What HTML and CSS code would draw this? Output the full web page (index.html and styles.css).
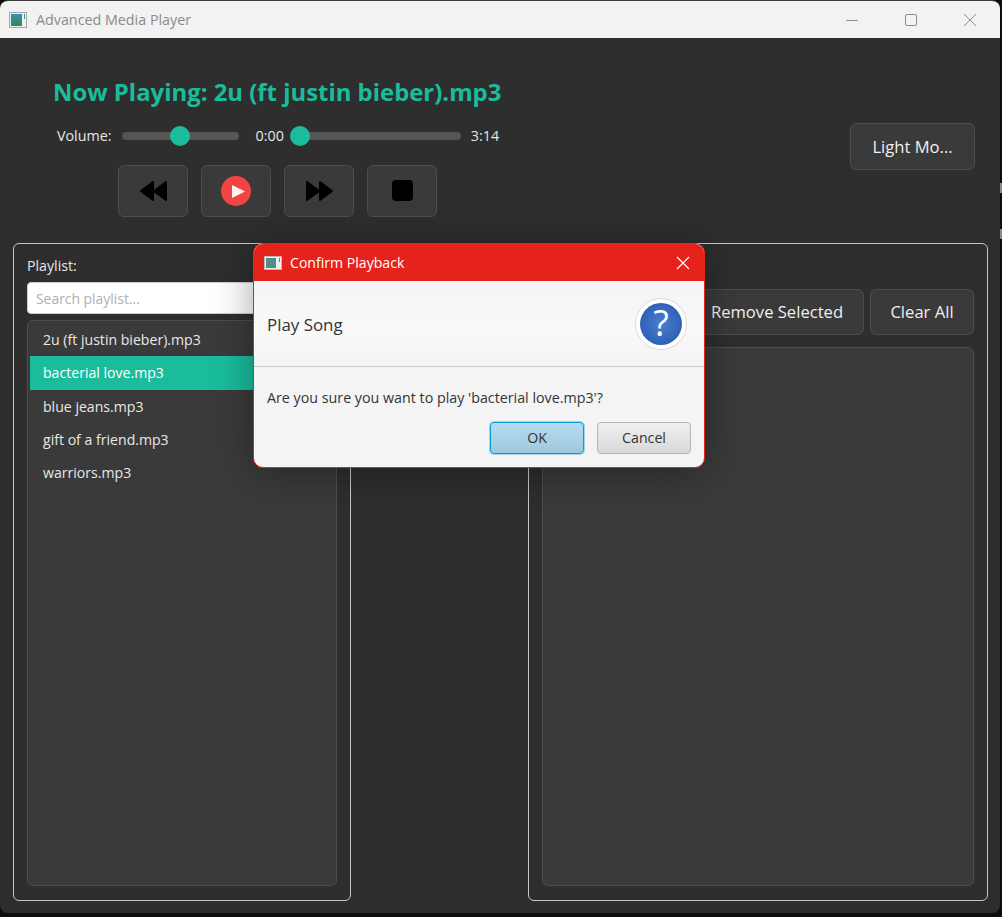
FILE: index.html
```html
<!DOCTYPE html>
<html lang="en">
<head>
<meta charset="utf-8">
<title>Advanced Media Player</title>
<link rel="stylesheet" href="styles.css">
</head>
<body>
<span class="edge-bit edge-a"></span>
<span class="edge-bit edge-b"></span>
<div class="window">
  <header class="titlebar">
    <svg class="app-icon" width="18" height="16" viewBox="0 0 18 16"><defs><linearGradient id="g1" x1="0" y1="0" x2="0" y2="1"><stop offset="0" stop-color="#3f8fb0"/><stop offset="1" stop-color="#2e8a4f"/></linearGradient></defs><rect x=".5" y=".5" width="17" height="15" fill="#eef0f2" stroke="#a4a8ac"/><rect x="2" y="2" width="11" height="12" fill="url(#g1)"/><rect x="15" y="2" width="1" height="5" fill="#3f8fa0"/></svg>
    <span class="app-title">Advanced Media Player</span>
    <div class="win-controls">
      <svg width="14" height="14" viewBox="0 0 14 14"><path d="M1 7.500h12" stroke="#8c8c8c" fill="none"/></svg>
      <svg width="14" height="14" viewBox="0 0 14 14"><rect x="1.500" y="1.500" width="11" height="11" rx="1.500" stroke="#8c8c8c" fill="none"/></svg>
      <svg width="14" height="14" viewBox="0 0 14 14"><path d="M1 1l12 12M13 1L1 13" stroke="#8c8c8c" fill="none"/></svg>
    </div>
  </header>
  <main class="content">
    <section class="top">
      <div class="player">
        <h1 class="now-playing">Now Playing: 2u (ft justin bieber).mp3</h1>
        <div class="sliders">
          <span class="lbl vol-lbl">Volume:</span>
          <div class="track vol-track"><span class="thumb vol-thumb"></span></div>
          <span class="lbl time-start">0:00</span>
          <div class="track time-track"><span class="thumb time-thumb"></span></div>
          <span class="lbl time-end">3:14</span>
        </div>
        <div class="transport">
          <button class="btn t-btn"><svg width="28" height="22" viewBox="0 0 28 22"><path d="M14 2v18L2 11z M27 2v18L15 11z" fill="#000" stroke="#000" stroke-width="2" stroke-linejoin="round"/></svg></button>
          <button class="btn t-btn"><svg width="30" height="30" viewBox="0 0 30 30"><circle cx="15" cy="15" r="15" fill="#f24444"/><path d="M11 9l13 6.500-13 6.500z" fill="#fff4ea"/></svg></button>
          <button class="btn t-btn"><svg width="28" height="22" viewBox="0 0 28 22"><path d="M2 2v18L14 11z M15 2v18L27 11z" fill="#000" stroke="#000" stroke-width="2" stroke-linejoin="round"/></svg></button>
          <button class="btn t-btn"><svg width="22" height="22" viewBox="0 0 22 22"><rect x="1" width="21" height="21" rx="4" fill="#000"/></svg></button>
        </div>
      </div>
      <button class="btn theme-btn">Light Mo...</button>
    </section>
    <section class="panels">
      <div class="panel left-panel">
        <div class="panel-label">Playlist:</div>
        <input class="search" type="text" placeholder="Search playlist...">
        <ul class="list">
          <li>2u (ft justin bieber).mp3</li>
          <li class="selected">bacterial love.mp3</li>
          <li>blue jeans.mp3</li>
          <li>gift of a friend.mp3</li>
          <li>warriors.mp3</li>
        </ul>
      </div>
      <div class="panel right-panel">
        <div class="actions">
          <button class="btn action-btn remove-btn">Remove Selected</button>
          <button class="btn action-btn clear-btn">Clear All</button>
        </div>
        <div class="list queue"></div>
      </div>
    </section>
  </main>
</div>
<div class="dialog">
  <div class="dlg-title">
    <svg class="app-icon" width="18" height="14" viewBox="0 0 18 14"><rect x=".5" y=".5" width="17" height="13" fill="#eef0f2" stroke="#c9b4b2"/><rect x="2" y="2" width="10" height="10" fill="#4f8f86"/><rect x="15" y="2" width="1" height="4" fill="#3f8fa0"/></svg>
    <span class="dlg-title-text">Confirm Playback</span>
    <svg class="dlg-close" width="14" height="14" viewBox="0 0 14 14"><path d="M1 1l12 12M13 1L1 13" stroke="#fff" stroke-width="1.100" fill="none"/></svg>
  </div>
  <div class="dlg-head">
    <span class="dlg-heading">Play Song</span>
    <svg width="52" height="52" viewBox="0 0 52 52"><defs><radialGradient id="q"><stop offset="0" stop-color="#4a7fd2"/><stop offset="1" stop-color="#2f60b4"/></radialGradient></defs><circle cx="26" cy="26" r="25.500" fill="#fff" stroke="#d8d8d8"/><circle cx="26" cy="26" r="21" fill="url(#q)"/><text class="q-mark" x="26" y="38" text-anchor="middle">?</text></svg>
  </div>
  <div class="dlg-body">
    <p class="dlg-msg">Are you sure you want to play 'bacterial love.mp3'?</p>
    <div class="dlg-buttons">
      <button class="dlg-btn ok">OK</button>
      <button class="dlg-btn cancel">Cancel</button>
    </div>
  </div>
</div>
</body>
</html>
```
FILE: styles.css
```css
* { box-sizing: border-box; }
html, body { margin: 0; height: 100%; }
body {
  background: #0d0d0d;
  font-family: "Open Sans", "Noto Sans", "Liberation Sans", sans-serif;
  overflow: hidden;
  position: relative;
  width: 1002px;
  height: 917px;
}
.edge-bit {
  position: absolute;
  left: 1000px;
  width: 2px;
  height: 10px;
  background: #8a8a8a;
}
.edge-a { top: 183px; }
.edge-b { top: 229px; }
.window {
  width: 1000px;
  height: 913px;
  border-radius: 8px;
  overflow: hidden;
  display: flex;
  flex-direction: column;
  border-top: 1px solid #3a3a3a;
}
.titlebar {
  height: 37px;
  flex: none;
  background: #f2f2f2;
  display: flex;
  align-items: center;
  padding-left: 9px;
  color: #8b8b8b;
  font-size: 14.300px;
}
.app-icon { flex: none; }
.app-title { margin-left: 9px; }
.win-controls {
  margin-left: auto;
  display: flex;
  gap: 45px;
  padding-right: 23px;
}
.content {
  flex: 1;
  background: #2e2e2e;
  display: flex;
  flex-direction: column;
  min-height: 0;
}
.top {
  height: 205px;
  flex: none;
  display: flex;
  align-items: flex-start;
  justify-content: space-between;
  padding-right: 25px;
}
.player { padding: 36px 0 0 53px; }
.now-playing {
  margin: 0;
  color: #1abc9c;
  font-size: 23.900px;
  font-weight: 700;
  line-height: 36px;
  white-space: nowrap;
}
.sliders {
  display: flex;
  align-items: center;
  height: 24px;
  margin-top: 14px;
  padding-left: 4px;
}
.lbl { color: #e6e6e6; font-size: 14.300px; line-height: 24px; }
.track {
  height: 8px;
  border-radius: 4px;
  background: #555;
  position: relative;
}
.vol-track { width: 117px; margin-left: 10px; }
.time-start { margin-left: 17px; }
.time-track { width: 171px; margin-left: 6px; }
.time-end { margin-left: 10px; }
.thumb {
  position: absolute;
  top: -6px;
  width: 20px;
  height: 20px;
  border-radius: 50%;
  background: #1abc9c;
}
.vol-thumb { left: 48px; }
.time-thumb { left: 0; }
.transport {
  display: flex;
  gap: 13px;
  margin: 17px 0 0 65px;
}
.btn {
  background: #3a3a3a;
  border: 1px solid #4d4d4d;
  border-radius: 6px;
  color: #f0f0f0;
  font-family: inherit;
  padding: 0;
}
.t-btn {
  width: 70px;
  height: 52px;
  display: flex;
  align-items: center;
  justify-content: center;
}
.theme-btn {
  width: 125px;
  height: 47px;
  margin-top: 85px;
  font-size: 16.600px;
}
.panels {
  flex: 1;
  min-height: 0;
  display: flex;
  justify-content: space-between;
  padding: 0 12px 12px 13px;
}
.panel {
  border: 1px solid #c8c8c8;
  border-radius: 6px;
  display: flex;
  flex-direction: column;
  padding: 0 13px 14px;
}
.left-panel { width: 338px; }
.right-panel { width: 460px; }
.panel-label {
  color: #e6e6e6;
  font-size: 14.200px;
  line-height: 18px;
  margin-top: 13px;
}
.search {
  height: 32px;
  width: 100%;
  margin-top: 7px;
  border: 1px solid #cfcfcf;
  border-radius: 4px;
  background: #fff;
  padding: 0 8px;
  font-family: inherit;
  font-size: 13.900px;
  outline: none;
}
.search::placeholder { color: #b0b0b0; opacity: 1; }
.list {
  flex: 1;
  min-height: 0;
  margin: 6px 0 0;
  padding: 2px;
  list-style: none;
  background: #3a3a3a;
  border: 1px solid #4d4d4d;
  border-radius: 6px;
}
.list li {
  height: 33.300px;
  line-height: 33px;
  padding-left: 13px;
  color: #e8e8e8;
  font-size: 14.100px;
}
.list li.selected { background: #1abc9c; color: #fff; }
.actions {
  display: flex;
  justify-content: flex-end;
  gap: 6px;
  margin-top: 45px;
}
.action-btn { height: 46px; font-size: 16.600px; padding-bottom: 2px; }
.remove-btn { width: 200px; padding-left: 26px; }
.clear-btn { width: 104px; }
.queue { margin-top: 12px; flex: 1; }
.dialog {
  position: absolute;
  left: 253px;
  top: 243px;
  width: 452px;
  height: 225px;
  border: 1px solid #e5231a;
  border-radius: 10px;
  overflow: hidden;
  background: #f4f4f4;
  box-shadow: 0 4px 40px rgba(0, 0, 0, 0.35);
  display: flex;
  flex-direction: column;
}
.dlg-title {
  height: 37px;
  flex: none;
  background: #e5231a;
  color: #fff;
  display: flex;
  align-items: center;
  padding: 0 14px 0 10px;
  font-size: 14.100px;
}
.dlg-title-text { margin-left: 8px; }
.dlg-close { margin-left: auto; }
.dlg-head {
  height: 86px;
  flex: none;
  background: linear-gradient(#f4f4f4, #f9f9f9 55%, #f4f4f4);
  border-bottom: 1px solid #c8c8c8;
  display: flex;
  align-items: center;
  justify-content: space-between;
  padding: 0 17px 0 13px;
}
.dlg-heading { color: #333; font-size: 16.900px; padding-top: 2px; }
.q-mark { fill: #fff; font-family: "Open Sans", sans-serif; font-size: 36px; }
.dlg-body { flex: 1; padding: 0 13px; }
.dlg-msg {
  margin: 21px 0 0;
  color: #333;
  font-size: 14.270px;
  line-height: 20px;
  white-space: nowrap;
}
.dlg-buttons {
  display: flex;
  justify-content: flex-end;
  gap: 13px;
  margin-top: 14px;
}
.dlg-btn {
  width: 94px;
  height: 32px;
  border-radius: 4px;
  font-family: inherit;
  font-size: 14.200px;
  color: #333;
  padding: 0 0 2px;
}
.ok {
  background: linear-gradient(#b5dbee, #9fc9de);
  border: 1px solid #039ed3;
  box-shadow: 0 0 0 1px rgba(3, 158, 211, 0.35);
}
.cancel {
  background: linear-gradient(#f0f0f0, #d8d8d8);
  border: 1px solid #b5b5b5;
}
```
